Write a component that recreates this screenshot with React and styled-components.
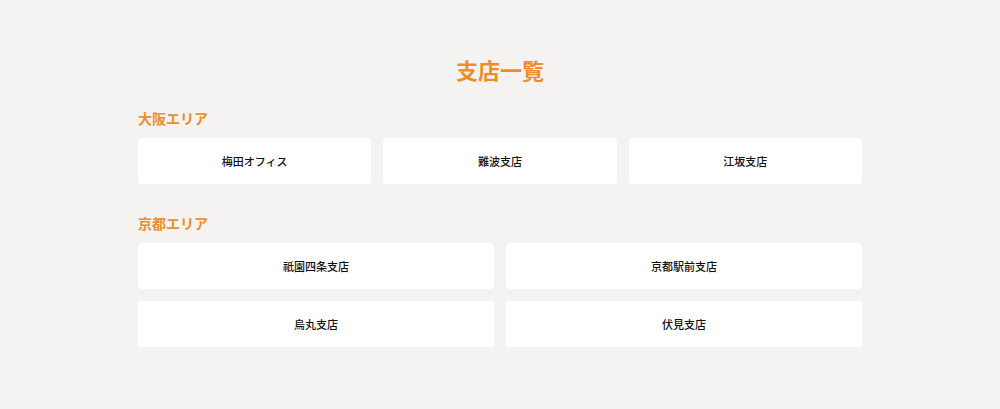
import React from 'react';
import styled, { createGlobalStyle } from 'styled-components';

const GlobalStyle = createGlobalStyle`
  body {
    margin: 0;
    background: #f4f3f1;
    font-family: "Noto Sans CJK JP", "Noto Sans", sans-serif;
    color: #111;
  }
`;

const Page = styled.main`
  width: 724px;
  margin: 0 auto;
  padding: 53px 0 40px;
`;

const Title = styled.h1`
  margin: 0 0 23px;
  font-size: 22px;
  line-height: 32px;
  font-weight: 700;
  text-align: center;
  color: #f08d2a;
`;

const Section = styled.section`
  & + & {
    margin-top: 29px;
  }
`;

const AreaName = styled.h2`
  margin: 0 0 10px;
  font-size: 14px;
  line-height: 20px;
  font-weight: 700;
  color: #f08d2a;
`;

const Grid = styled.div`
  display: grid;
  grid-template-columns: repeat(${(p) => p.$cols}, 1fr);
  gap: 12px;
`;

const Branch = styled.a`
  display: flex;
  align-items: center;
  justify-content: center;
  height: 46px;
  background: #fff;
  border-radius: 4px;
  font-size: 11px;
  font-weight: 500;
  color: #111;
  text-decoration: none;
`;

const areas = [
  { name: '大阪エリア', cols: 3, branches: ['梅田オフィス', '難波支店', '江坂支店'] },
  { name: '京都エリア', cols: 2, branches: ['祇園四条支店', '京都駅前支店', '烏丸支店', '伏見支店'] },
];

export default function App() {
  return (
    <>
      <GlobalStyle />
      <Page>
        <Title>支店一覧</Title>
        {areas.map((area) => (
          <Section key={area.name}>
            <AreaName>{area.name}</AreaName>
            <Grid $cols={area.cols}>
              {area.branches.map((b) => (
                <Branch key={b} href="#">
                  {b}
                </Branch>
              ))}
            </Grid>
          </Section>
        ))}
      </Page>
    </>
  );
}
